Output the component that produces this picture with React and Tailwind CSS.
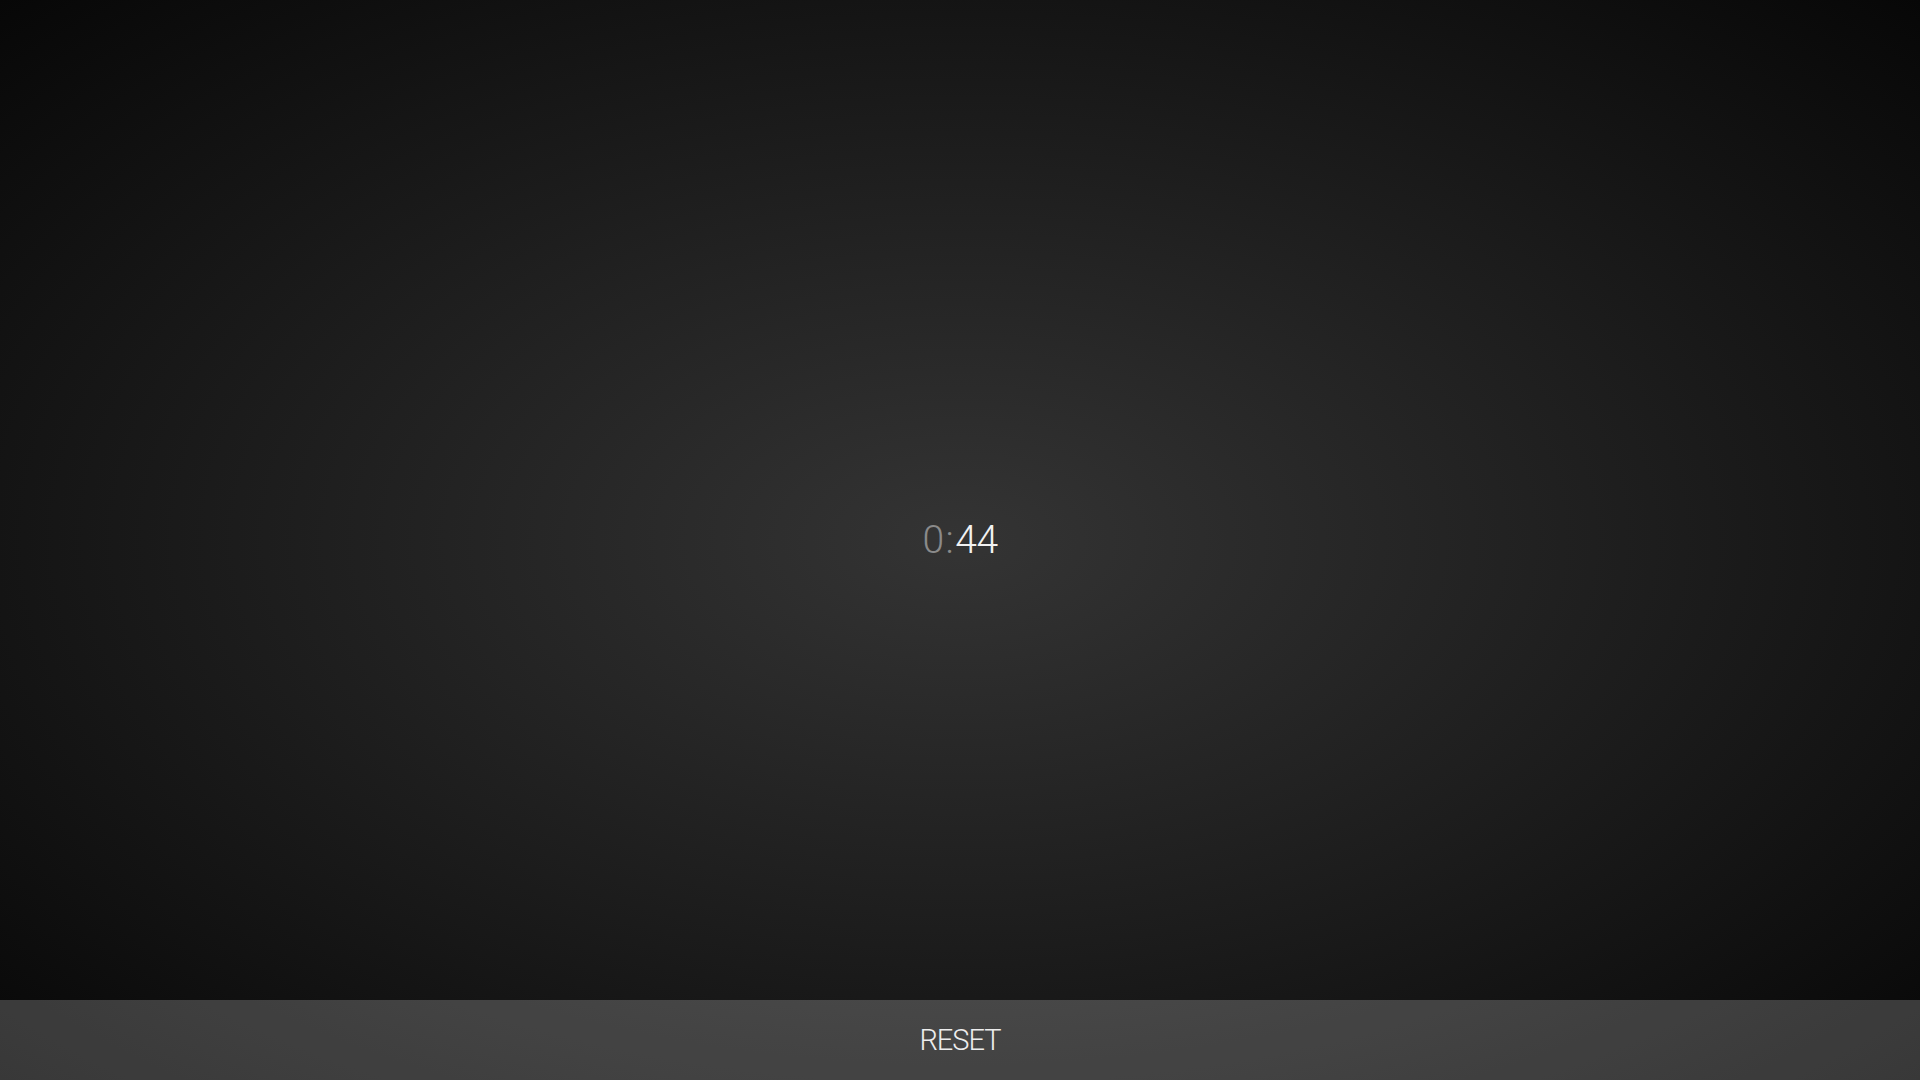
export default function App() {
  return (
    <div className="flex h-screen w-full flex-col bg-[radial-gradient(ellipse_farthest-corner_at_50%_50%,#343434_0%,#070707_100%)] font-['Roboto',sans-serif]">
      <main className="flex flex-1 items-center justify-center pt-[80px]">
        <div className="flex items-baseline text-[39px] font-light leading-none tabular-nums tracking-[-0.5px]">
          <span className="text-[#8a8a8a]">0</span>
          <span className="mx-[2px] text-[#8a8a8a]">:</span>
          <span className="text-[#f2f2f2]">44</span>
        </div>
      </main>
      <button
        type="button"
        className="flex h-[80px] w-full items-center justify-center bg-white/20 text-[29px] font-light leading-none tracking-[-1px] text-[#ededed]"
      >
        RESET
      </button>
    </div>
  )
}
